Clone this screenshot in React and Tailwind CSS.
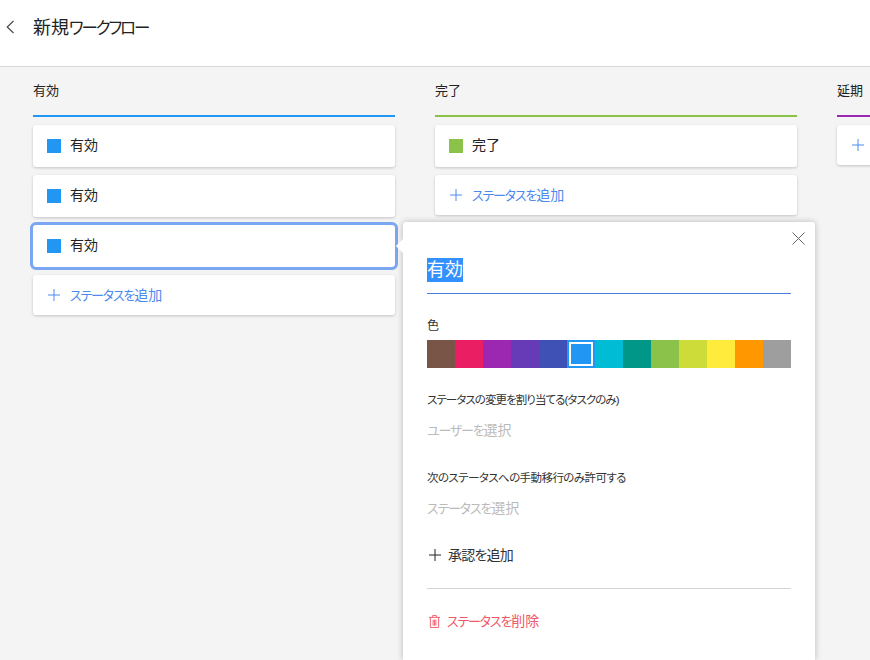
import React from 'react';

const font = "font-['Liberation_Sans','Noto_Sans_CJK_JP',sans-serif] [font-feature-settings:'palt']";

const swatches = [
  'bg-[#795548]', 'bg-[#e91e63]', 'bg-[#9c27b0]', 'bg-[#673ab7]', 'bg-[#3f51b5]', 'bg-[#2196f3]', 'bg-[#00bcd4]',
  'bg-[#009688]', 'bg-[#8bc34a]', 'bg-[#cddc39]', 'bg-[#ffeb3b]', 'bg-[#ff9800]', 'bg-[#9e9e9e]',
];

// the kana in the picture are much narrower than the kanji next to them
function Kana({ children }) {
  return <span className="text-[13px] tracking-[-1.2px]">{children}</span>;
}

function PlusIcon({ className }) {
  return (
    <svg viewBox="0 0 12 12" className={"h-[12px] w-[12px] shrink-0 " + className} fill="none" stroke="currentColor" strokeWidth="1">
      <path d="M0 6H12M6 0V12" />
    </svg>
  );
}

function StatusCard({ color, label, selected }) {
  return (
    <div className={"relative flex h-[42px] items-center rounded-[3px] bg-white pb-[2px] pl-[14px] text-[14px] text-[#222] shadow-[0_1px_3px_rgba(0,0,0,0.2)] " + (selected ? "outline-3 outline-[#7ba6f2]" : "")}>
      <span className={"mr-[9px] mt-[2px] h-[14px] w-[14px] " + color}></span>
      {label}
    </div>
  );
}

function AddCard() {
  return (
    <div className="flex h-[40px] items-center rounded-[3px] bg-white pl-[15px] text-[14px] text-[#4d8af0] shadow-[0_1px_3px_rgba(0,0,0,0.2)]">
      <PlusIcon className="mr-[10px]" />
      <span className="whitespace-nowrap"><Kana>ステータスを</Kana>追加</span>
    </div>
  );
}

function Column({ title, lineColor, children }) {
  return (
    <div className="flex w-[362px] shrink-0 flex-col">
      <div className="flex h-[48px] items-center text-[13px] text-[#222]">{title}</div>
      <div className={"mb-[8px] h-[2px] " + lineColor}></div>
      <div className="flex flex-col gap-[8px]">{children}</div>
    </div>
  );
}

function Popover() {
  return (
    <div className="absolute left-[403px] top-[222px] h-[438px] w-[412px] rounded-t-[3px] bg-white px-[24px] shadow-[0_0_6px_rgba(0,0,0,0.25)]">
      <div className="absolute -left-[5px] top-[19px] h-[10px] w-[10px] rotate-45 bg-white"></div>
      <svg viewBox="0 0 13 13" className="absolute right-[10px] top-[10px] h-[13px] w-[13px] text-[#666]" fill="none" stroke="currentColor" strokeWidth="1">
        <path d="M0.5 0.5L12.5 12.5M12.5 0.5L0.5 12.5" />
      </svg>
      <div className="flex h-[72px] items-start border-b border-[#4d7fdc] pt-[36px]">
        <span className="bg-[#3390ff] text-[18px] leading-[24px] text-white">有効</span>
      </div>
      <div className="mt-[24px] text-[12px] leading-[16px] text-[#333]">色</div>
      <div className="mt-[6px] flex h-[28px]">
        {swatches.map((c, i) => (
          <div key={i} className={"relative h-[28px] w-[28px] " + c}>
            {i === 5 && <div className="absolute inset-[2px] border-2 border-white"></div>}
          </div>
        ))}
      </div>
      <div className="mt-[24px] whitespace-nowrap text-[11.5px] leading-[16px] tracking-[-0.94px] text-[#333]">ステータスの変更を割り当てる(タスクのみ)</div>
      <div className="mt-[12px] text-[14px] leading-[20px] text-[#bbb]"><Kana>ユーザーを</Kana>選択</div>
      <div className="mt-[29px] whitespace-nowrap text-[11.5px] leading-[16px] tracking-[-0.58px] text-[#333]">次のステータスへの手動移行のみ許可する</div>
      <div className="mt-[12px] text-[14px] leading-[20px] text-[#bbb]"><Kana>ステータスを</Kana>選択</div>
      <div className="mt-[26px] flex items-center text-[14px] leading-[20px] tracking-[-0.8px] text-[#333]">
        <PlusIcon className="ml-[2px] mr-[7px] h-[11px] w-[11px] text-[#222]" />
        承認を追加
      </div>
      <div className="mt-[23px] h-px bg-[#d4d4d4]"></div>
      <div className="mt-[22px] flex items-center text-[14px] leading-[20px] text-[#f0596a]">
        <svg viewBox="0 0 12 14" className="ml-[2px] mr-[7px] h-[13px] w-[11px] shrink-0" fill="none" stroke="currentColor" strokeWidth="1">
          <path d="M0 2.5H12M4 2.5V0.5H8V2.5M1.5 2.5V13.5H10.5V2.5M4.5 5V11.5M6 5V11.5M7.5 5V11.5" />
        </svg>
        <span><Kana>ステータスを</Kana>削除</span>
      </div>
    </div>
  );
}

export default function App() {
  return (
    <div className={"relative flex h-[660px] w-[870px] flex-col overflow-hidden bg-[#f4f4f4] " + font}>
      <div className="flex h-[67px] shrink-0 items-start border-b border-[#d8d8d8] bg-white pl-[6px] pt-[17px]">
        <svg viewBox="0 0 8 14" className="mr-[19px] mt-[3px] h-[14px] w-[8px] text-[#444]" fill="none" stroke="currentColor" strokeWidth="1.1">
          <path d="M7.5 1L1.2 7L7.5 13" />
        </svg>
        <span className="text-[18px] leading-[22px] text-[#222]">新規<span className="text-[16.5px] tracking-[-2.1px]">ワークフロー</span></span>
      </div>
      <div className="flex gap-[40px] pl-[33px]">
        <Column title="有効" lineColor="bg-[#2196f3]">
          <StatusCard color="bg-[#2196f3]" label="有効" />
          <StatusCard color="bg-[#2196f3]" label="有効" />
          <StatusCard color="bg-[#2196f3]" label="有効" selected />
          <AddCard />
        </Column>
        <Column title="完了" lineColor="bg-[#8bc34a]">
          <StatusCard color="bg-[#8bc34a]" label="完了" />
          <AddCard />
        </Column>
        <Column title="延期" lineColor="bg-[#9c27b0]">
          <AddCard />
        </Column>
      </div>
      <Popover />
    </div>
  );
}
